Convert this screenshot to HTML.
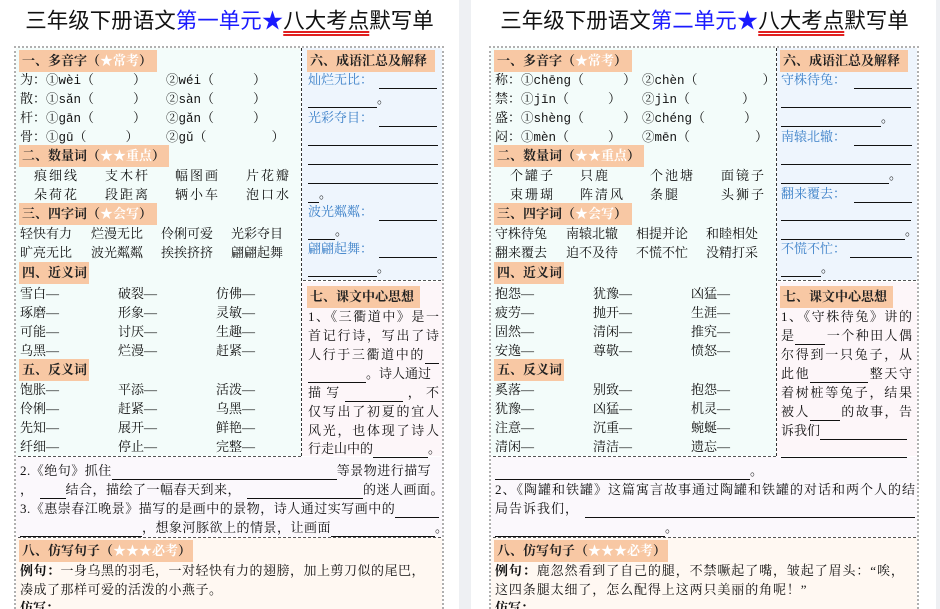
<!DOCTYPE html>
<html><head><meta charset="utf-8">
<style>
*{margin:0;padding:0;box-sizing:border-box}
body{width:940px;height:609px;overflow:hidden;background:#eef0f3;position:relative;font-family:"Liberation Serif","Noto Serif CJK SC",serif;color:#111}
.pg{position:absolute;top:0;width:465px;height:609px;background:#fff;overflow:hidden}
.a{position:absolute;white-space:nowrap;font-size:13px;line-height:19px}
.m{font-family:"Liberation Mono","Noto Serif CJK SC",monospace;font-size:12.5px}
.ls{letter-spacing:0.5px}
.title{position:absolute;top:6px;left:0;width:459px;text-align:center;font-family:"Liberation Sans","Noto Sans CJK SC",sans-serif;font-size:21.5px;line-height:30px;color:#111;white-space:nowrap}
.title .b{color:#1a1aff}
.title u{text-decoration:underline double #e02020;text-underline-offset:3px}
.box{position:absolute;left:14px;top:46px;width:430px;height:563px;border:2px dotted #b0b0b0;border-bottom:none}
.mint{position:absolute;left:16px;top:48px;width:285px;height:408px;background:#f3fcfa}
.blue{position:absolute;left:302px;top:48px;width:140px;height:232px;background:#eef5fd}
.pink{position:absolute;left:302px;top:282px;width:140px;height:174px;background:#fdf6f9}
.lav{position:absolute;left:16px;top:457px;width:426px;height:80px;background:#fbf8fc}
.peach{position:absolute;left:16px;top:538px;width:426px;height:71px;background:#fff8f2}
.vd{position:absolute;left:301px;top:48px;width:0;height:408px;border-left:1px dashed #333}
.hd{position:absolute;height:0;border-top:1px dashed #555}
.h{position:absolute;height:22px;line-height:22px;background:#f8c8a4;font-weight:bold;font-size:13px;padding:0 3px;white-space:nowrap;color:#222}
.h i{font-style:normal;color:#fff}
.ul{display:inline-block;border-bottom:1px solid #111;height:14px;vertical-align:bottom}
.bl{color:#3a7fc8}
.j{position:absolute;font-size:13px;line-height:19px;width:131px;text-align:justify;text-align-last:justify;white-space:nowrap}
</style></head><body>

<!-- LEFT PAGE -->
<div class="pg" style="left:0;width:459px">
<div class="title">三年级下册语文<span class="b">第一单元★</span><u>八大考点</u>默写单</div>
<div class="mint"></div><div class="blue"></div><div class="pink"></div><div class="lav"></div><div class="peach"></div>
<div class="box"></div>
<div class="vd"></div>
<div class="hd" style="left:303px;top:280px;width:138px"></div>
<div class="hd" style="left:18px;top:456px;width:283px"></div>
<div class="hd" style="left:18px;top:537px;width:423px"></div>

<div class="h" style="left:19px;top:50px;width:138px">一、多音字（<i>★常考</i>）</div>
<div class="a" style="left:20px;top:70px">为：<span class="m">①wèi</span>（　　　）</div><div class="a" style="left:166px;top:70px"><span class="m">②wéi</span>（　　　）</div>
<div class="a" style="left:20px;top:89px">散：<span class="m">①sǎn</span>（　　　）</div><div class="a" style="left:166px;top:89px"><span class="m">②sàn</span>（　　　）</div>
<div class="a" style="left:20px;top:108px">杆：<span class="m">①gān</span>（　　　）</div><div class="a" style="left:166px;top:108px"><span class="m">②gǎn</span>（　　　）</div>
<div class="a" style="left:20px;top:127px">骨：<span class="m">①gū</span>（　　　）</div><div class="a" style="left:166px;top:127px"><span class="m">②gǔ</span>（　　　　　）</div>
<div class="h" style="left:19px;top:145px;width:150px">二、数量词（<i>★★重点</i>）</div>
<div class="a" style="left:34px;top:166px;letter-spacing:2px">痕细线</div><div class="a" style="left:105px;top:166px;letter-spacing:2px">支木杆</div><div class="a" style="left:175px;top:166px;letter-spacing:2px">幅图画</div><div class="a" style="left:246px;top:166px;letter-spacing:2px">片花瓣</div>
<div class="a" style="left:34px;top:185px;letter-spacing:2px">朵荷花</div><div class="a" style="left:105px;top:185px;letter-spacing:2px">段距离</div><div class="a" style="left:175px;top:185px;letter-spacing:2px">辆小车</div><div class="a" style="left:246px;top:185px;letter-spacing:2px">泡口水</div>
<div class="h" style="left:19px;top:203px;width:138px">三、四字词（<i>★会写</i>）</div>
<div class="a" style="left:20px;top:224px">轻快有力</div><div class="a" style="left:91px;top:224px">烂漫无比</div><div class="a" style="left:161px;top:224px">伶俐可爱</div><div class="a" style="left:231px;top:224px">光彩夺目</div>
<div class="a" style="left:20px;top:243px">旷亮无比</div><div class="a" style="left:91px;top:243px">波光粼粼</div><div class="a" style="left:161px;top:243px">挨挨挤挤</div><div class="a" style="left:231px;top:243px">翩翩起舞</div>
<div class="h" style="left:19px;top:262px;width:70px">四、近义词</div>
<div class="a" style="left:20px;top:284px">雪白—</div><div class="a" style="left:118px;top:284px">破裂—</div><div class="a" style="left:216px;top:284px">仿佛—</div>
<div class="a" style="left:20px;top:303px">琢磨—</div><div class="a" style="left:118px;top:303px">形象—</div><div class="a" style="left:216px;top:303px">灵敏—</div>
<div class="a" style="left:20px;top:322px">可能—</div><div class="a" style="left:118px;top:322px">讨厌—</div><div class="a" style="left:216px;top:322px">生趣—</div>
<div class="a" style="left:20px;top:341px">乌黑—</div><div class="a" style="left:118px;top:341px">烂漫—</div><div class="a" style="left:216px;top:341px">赶紧—</div>
<div class="h" style="left:19px;top:359px;width:70px">五、反义词</div>
<div class="a" style="left:20px;top:380px">饱胀—</div><div class="a" style="left:118px;top:380px">平添—</div><div class="a" style="left:216px;top:380px">活泼—</div>
<div class="a" style="left:20px;top:399px">伶俐—</div><div class="a" style="left:118px;top:399px">赶紧—</div><div class="a" style="left:216px;top:399px">乌黑—</div>
<div class="a" style="left:20px;top:418px">先知—</div><div class="a" style="left:118px;top:418px">展开—</div><div class="a" style="left:216px;top:418px">鲜艳—</div>
<div class="a" style="left:20px;top:437px">纤细—</div><div class="a" style="left:118px;top:437px">停止—</div><div class="a" style="left:216px;top:437px">完整—</div>

<div class="h" style="left:307px;top:50px;width:128px">六、成语汇总及解释</div>
<div class="a bl" style="left:308px;top:70px">灿烂无比：<span class="ul" style="width:58px;margin-left:6px"></span></div>
<div class="a" style="left:308px;top:89px"><span class="ul" style="width:69px"></span>。</div>
<div class="a bl" style="left:308px;top:108px">光彩夺目：<span class="ul" style="width:58px;margin-left:6px"></span></div>
<div class="a" style="left:308px;top:127px"><span class="ul" style="width:130px"></span></div>
<div class="a" style="left:308px;top:146px"><span class="ul" style="width:130px"></span></div>
<div class="a" style="left:308px;top:165px"><span class="ul" style="width:130px"></span></div>
<div class="a" style="left:308px;top:184px"><span class="ul" style="width:11px"></span>。</div>
<div class="a bl" style="left:308px;top:202px">波光粼粼：<span class="ul" style="width:58px;margin-left:6px"></span></div>
<div class="a" style="left:308px;top:221px"><span class="ul" style="width:27px"></span>。</div>
<div class="a bl" style="left:308px;top:239px">翩翩起舞：<span class="ul" style="width:58px;margin-left:6px"></span></div>
<div class="a" style="left:308px;top:258px"><span class="ul" style="width:69px"></span>。</div>
<div class="h" style="left:307px;top:286px;width:113px">七、课文中心思想</div>
<div class="j" style="left:308px;top:307px">1、《三衢道中》是一</div>
<div class="j" style="left:308px;top:326px">首记行诗，写出了诗</div>
<div class="j" style="left:308px;top:345px">人行于三衢道中的<span class="ul" style="width:14px"></span></div>
<div class="a" style="left:308px;top:364px"><span class="ul" style="width:58px"></span>。诗人通过</div>
<div class="j" style="left:308px;top:383px">描写<span class="ul" style="width:58px"></span>，不</div>
<div class="j" style="left:308px;top:402px">仅写出了初夏的宜人</div>
<div class="j" style="left:308px;top:421px">风光，也体现了诗人</div>
<div class="a" style="left:308px;top:439px">行走山中的<span class="ul" style="width:55px"></span>。</div>

<div class="a ls" style="left:20px;top:461px">2.《绝句》抓住<span class="ul" style="width:225px"></span>等景物进行描写</div>
<div class="a ls" style="left:20px;top:480px">，<span class="ul" style="width:26px;margin-left:6px"></span>结合，描绘了一幅春天到来，<span class="ul" style="width:116px;margin-left:6px"></span>的迷人画面。</div>
<div class="a ls" style="left:20px;top:499px">3.《惠崇春江晚景》描写的是画中的景物，诗人通过实写画中的<span class="ul" style="width:44px"></span></div>
<div class="a ls" style="left:20px;top:518px"><span class="ul" style="width:122px"></span>，想象河豚欲上的情景，让画面<span class="ul" style="width:104px"></span>。</div>
<div class="h" style="left:19px;top:540px;width:174px">八、仿写句子（<i>★★★必考</i>）</div>
<div class="a ls" style="left:20px;top:561px"><b>例句：</b>一身乌黑的羽毛，一对轻快有力的翅膀，加上剪刀似的尾巴，</div>
<div class="a ls" style="left:20px;top:580px">凑成了那样可爱的活泼的小燕子。</div>
<div class="a" style="left:20px;top:598px"><b>仿写：</b></div>
</div>

<!-- RIGHT PAGE -->
<div class="pg" style="left:471px;width:465px">
<div style="position:absolute;left:4px;top:0;width:461px;height:609px">
<div class="title">三年级下册语文<span class="b">第二单元★</span><u>八大考点</u>默写单</div>
<div class="mint"></div><div class="blue"></div><div class="pink"></div><div class="lav"></div><div class="peach"></div>
<div class="box"></div>
<div class="vd"></div>
<div class="hd" style="left:303px;top:280px;width:138px"></div>
<div class="hd" style="left:18px;top:456px;width:283px"></div>
<div class="hd" style="left:18px;top:537px;width:423px"></div>

<div class="h" style="left:19px;top:50px;width:138px">一、多音字（<i>★常考</i>）</div>
<div class="a" style="left:20px;top:70px">称：<span class="m">①chēng</span>（　　　）</div><div class="a" style="left:167px;top:70px"><span class="m">②chèn</span>（　　　　　）</div>
<div class="a" style="left:20px;top:89px">禁：<span class="m">①jīn</span>（　　　）</div><div class="a" style="left:167px;top:89px"><span class="m">②jìn</span>（　　　　）</div>
<div class="a" style="left:20px;top:108px">盛：<span class="m">①shèng</span>（　　　）</div><div class="a" style="left:167px;top:108px"><span class="m">②chéng</span>（　　　）</div>
<div class="a" style="left:20px;top:127px">闷：<span class="m">①mèn</span>（　　　）</div><div class="a" style="left:167px;top:127px"><span class="m">②mēn</span>（　　　　　）</div>
<div class="h" style="left:19px;top:145px;width:150px">二、数量词（<i>★★重点</i>）</div>
<div class="a" style="left:35px;top:166px;letter-spacing:2px">个罐子</div><div class="a" style="left:105px;top:166px;letter-spacing:2px">只鹿</div><div class="a" style="left:175px;top:166px;letter-spacing:2px">个池塘</div><div class="a" style="left:246px;top:166px;letter-spacing:2px">面镜子</div>
<div class="a" style="left:35px;top:185px;letter-spacing:2px">束珊瑚</div><div class="a" style="left:105px;top:185px;letter-spacing:2px">阵清风</div><div class="a" style="left:175px;top:185px;letter-spacing:2px">条腿</div><div class="a" style="left:246px;top:185px;letter-spacing:2px">头狮子</div>
<div class="h" style="left:19px;top:203px;width:138px">三、四字词（<i>★会写</i>）</div>
<div class="a" style="left:20px;top:224px">守株待兔</div><div class="a" style="left:91px;top:224px">南辕北辙</div><div class="a" style="left:161px;top:224px">相提并论</div><div class="a" style="left:231px;top:224px">和睦相处</div>
<div class="a" style="left:20px;top:243px">翻来覆去</div><div class="a" style="left:91px;top:243px">迫不及待</div><div class="a" style="left:161px;top:243px">不慌不忙</div><div class="a" style="left:231px;top:243px">没精打采</div>
<div class="h" style="left:19px;top:262px;width:70px">四、近义词</div>
<div class="a" style="left:20px;top:284px">抱怨—</div><div class="a" style="left:118px;top:284px">犹豫—</div><div class="a" style="left:216px;top:284px">凶猛—</div>
<div class="a" style="left:20px;top:303px">疲劳—</div><div class="a" style="left:118px;top:303px">抛开—</div><div class="a" style="left:216px;top:303px">生涯—</div>
<div class="a" style="left:20px;top:322px">固然—</div><div class="a" style="left:118px;top:322px">清闲—</div><div class="a" style="left:216px;top:322px">推究—</div>
<div class="a" style="left:20px;top:341px">安逸—</div><div class="a" style="left:118px;top:341px">尊敬—</div><div class="a" style="left:216px;top:341px">愤怒—</div>
<div class="h" style="left:19px;top:359px;width:70px">五、反义词</div>
<div class="a" style="left:20px;top:380px">奚落—</div><div class="a" style="left:118px;top:380px">别致—</div><div class="a" style="left:216px;top:380px">抱怨—</div>
<div class="a" style="left:20px;top:399px">犹豫—</div><div class="a" style="left:118px;top:399px">凶猛—</div><div class="a" style="left:216px;top:399px">机灵—</div>
<div class="a" style="left:20px;top:418px">注意—</div><div class="a" style="left:118px;top:418px">沉重—</div><div class="a" style="left:216px;top:418px">蜿蜒—</div>
<div class="a" style="left:20px;top:437px">清闲—</div><div class="a" style="left:118px;top:437px">清洁—</div><div class="a" style="left:216px;top:437px">遗忘—</div>

<div class="h" style="left:305px;top:50px;width:128px">六、成语汇总及解释</div>
<div class="a bl" style="left:306px;top:70px">守株待兔：<span class="ul" style="width:58px;margin-left:8px"></span></div>
<div class="a" style="left:306px;top:89px"><span class="ul" style="width:130px"></span></div>
<div class="a" style="left:306px;top:108px"><span class="ul" style="width:100px"></span>。</div>
<div class="a bl" style="left:306px;top:127px">南辕北辙：<span class="ul" style="width:58px;margin-left:8px"></span></div>
<div class="a" style="left:306px;top:146px"><span class="ul" style="width:130px"></span></div>
<div class="a" style="left:306px;top:165px"><span class="ul" style="width:108px"></span>。</div>
<div class="a bl" style="left:306px;top:184px">翻来覆去：<span class="ul" style="width:58px;margin-left:8px"></span></div>
<div class="a" style="left:306px;top:202px"><span class="ul" style="width:130px"></span></div>
<div class="a" style="left:306px;top:221px"><span class="ul" style="width:124px"></span>。</div>
<div class="a bl" style="left:306px;top:239px">不慌不忙：<span class="ul" style="width:62px;margin-left:4px"></span></div>
<div class="a" style="left:306px;top:258px"><span class="ul" style="width:40px"></span>。</div>
<div class="h" style="left:305px;top:286px;width:113px">七、课文中心思想</div>
<div class="j" style="left:306px;top:307px">1、《守株待兔》讲的</div>
<div class="j" style="left:306px;top:326px">是<span class="ul" style="width:30px"></span>一个种田人偶</div>
<div class="j" style="left:306px;top:345px">尔得到一只兔子，从</div>
<div class="j" style="left:306px;top:364px">此他<span class="ul" style="width:58px"></span>整天守</div>
<div class="j" style="left:306px;top:383px">着树桩等兔子，结果</div>
<div class="j" style="left:306px;top:402px">被人<span class="ul" style="width:30px"></span>的故事，告</div>
<div class="a" style="left:306px;top:421px">诉我们<span class="ul" style="width:87px"></span></div>
<div class="a" style="left:306px;top:439px"><span class="ul" style="width:126px"></span></div>

<div class="a" style="left:20px;top:461px"><span class="ul" style="width:255px"></span>。</div>
<div class="a" style="left:20px;top:480px;letter-spacing:1px">2、《陶罐和铁罐》这篇寓言故事通过陶罐和铁罐的对话和两个人的结</div>
<div class="a" style="left:20px;top:499px;letter-spacing:1px">局告诉我们，<span class="ul" style="width:330px;margin-left:6px"></span></div>
<div class="a" style="left:20px;top:518px"><span class="ul" style="width:170px"></span>。</div>
<div class="h" style="left:19px;top:540px;width:174px">八、仿写句子（<i>★★★必考</i>）</div>
<div class="a" style="left:20px;top:561px;letter-spacing:0.9px"><b>例句：</b>鹿忽然看到了自己的腿，不禁噘起了嘴，皱起了眉头：“唉，</div>
<div class="a" style="left:20px;top:580px;letter-spacing:0.9px">这四条腿太细了，怎么配得上这两只美丽的角呢！”</div>
<div class="a" style="left:20px;top:598px"><b>仿写：</b></div>
</div>
</div>
</body></html>
